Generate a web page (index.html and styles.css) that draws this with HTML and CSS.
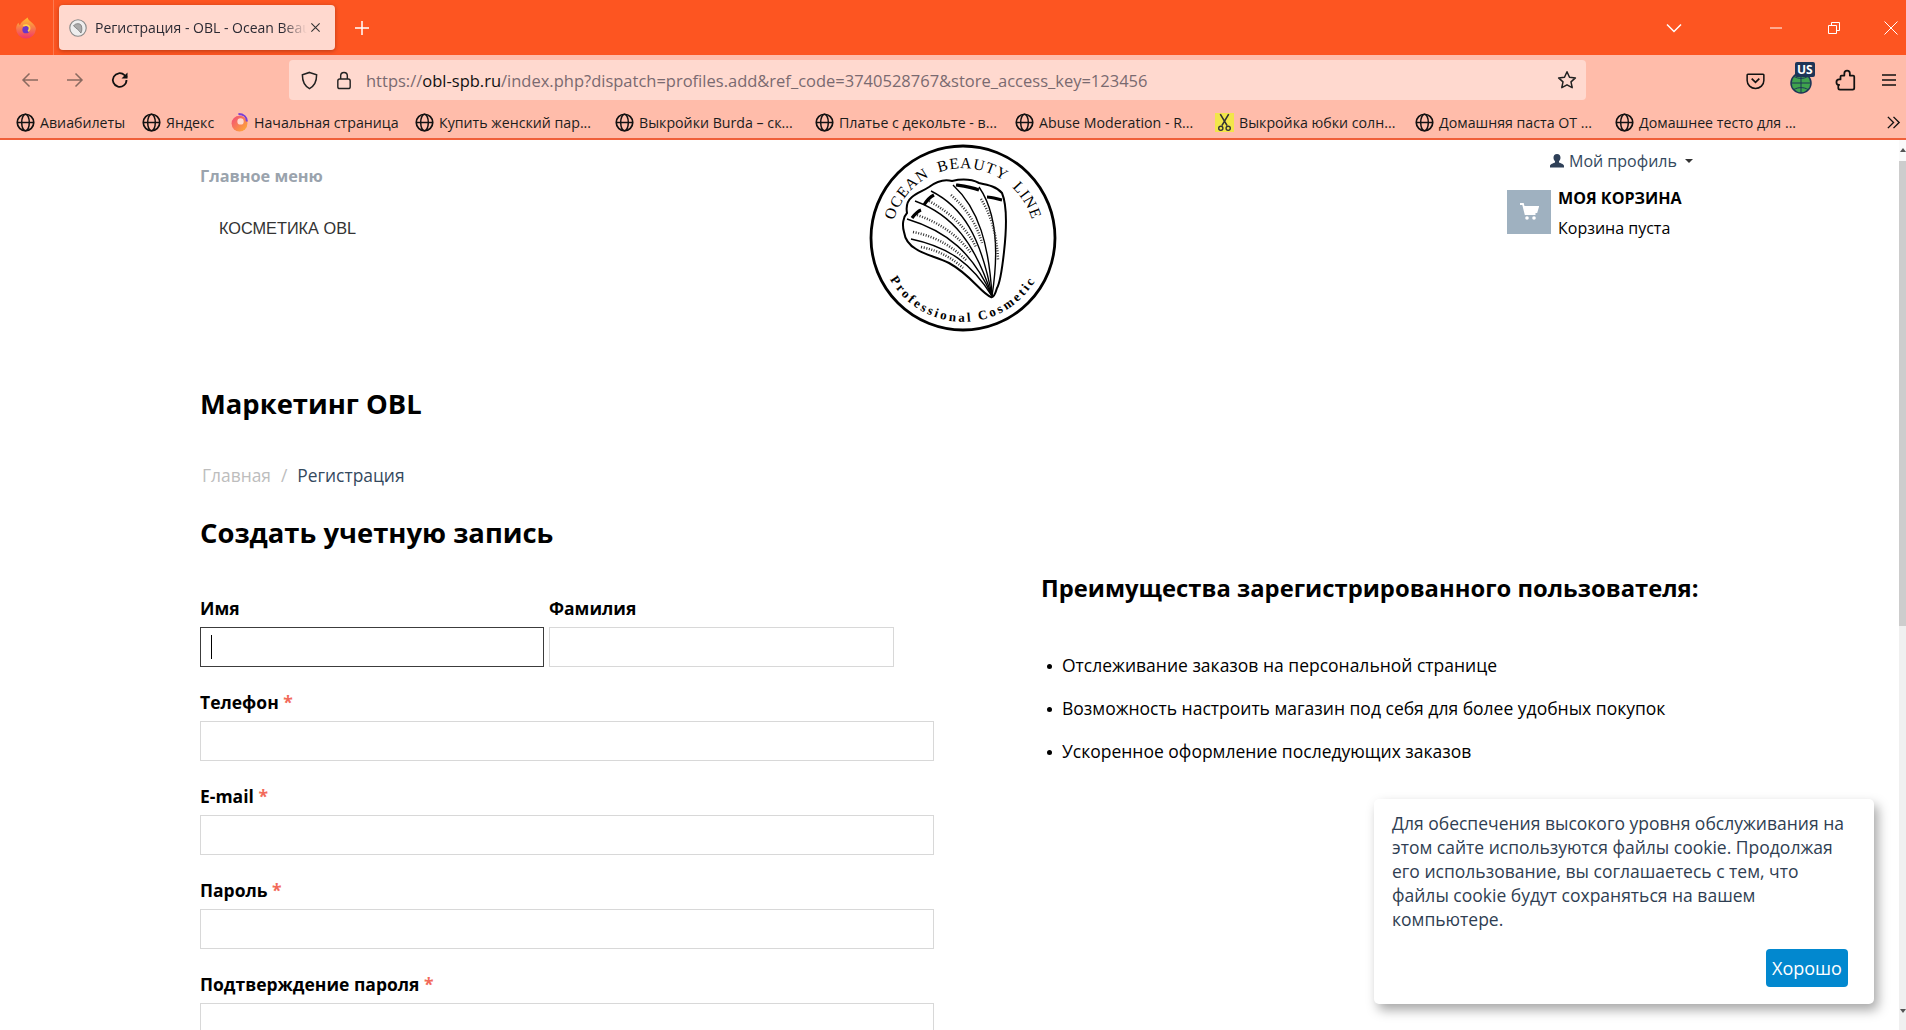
FILE: index.html
```html
<!DOCTYPE html>
<html lang="ru">
<head>
<meta charset="utf-8">
<title>Регистрация - OBL</title>
<link rel="stylesheet" href="styles.css">
</head>
<body>
<svg class="defs" width="0" height="0">
  <symbol id="globe" viewBox="0 0 18 18"><circle cx="9" cy="9" r="7.8" fill="none" stroke="#111" stroke-width="1.6"/><ellipse cx="9" cy="9" rx="3.6" ry="7.8" fill="none" stroke="#111" stroke-width="1.4"/><path d="M1.5 9h15" stroke="#111" stroke-width="1.4"/></symbol>
</svg>
<div class="tabbar">
  <div class="ff-cell">
    <svg class="ff" viewBox="0 0 20 20"><defs><linearGradient id="ffg" x1="0" y1="0" x2="0" y2="1"><stop offset="0" stop-color="#ffc02e"/><stop offset="1" stop-color="#f0366a"/></linearGradient></defs><path d="M10 19.500a9 9 0 0 1-9-9.300c.2-2.200 1-3.700 2.200-4.900.2 1 .6 1.700 1.300 2.100C5.500 4.800 8 3 11.500.5c.2 2 2 2.700 4.200 5 2 2 3.300 3.700 3.300 5.500a9 9 0 0 1-9 8.500z" fill="url(#ffg)"/><circle cx="10" cy="11.500" r="3.300" fill="#6b35c9"/><path d="M7.500 8c2-1.200 4.500-.8 5.500 1 .6 1.500 0 3-1 4" fill="none" stroke="#ffd24a" stroke-width="1.600"/></svg>
  </div>
  <div class="tab">
    <svg class="favicon" viewBox="0 0 16 16"><circle cx="8" cy="8" r="7.300" fill="#eee" stroke="#888"/><path d="M4 6c2-2.500 6-2.500 7 0 .8 2.500.4 5-.4 6.500C9 10 6 8 4 6z" fill="#aaa" stroke="#666" stroke-width=".6"/></svg>
    <span class="tab-title">Регистрация - OBL - Ocean Beauty Line</span>
    <svg class="tab-close" viewBox="0 0 12 12"><path d="M1.500 1.500l9 9m0-9l-9 9" stroke="#333" stroke-width="1.200"/></svg>
  </div>
  <svg class="plus" viewBox="0 0 16 16"><path d="M8 1v14M1 8h14" stroke="#fff" stroke-width="1.500"/></svg>
  <div class="win">
    <svg class="chev" viewBox="0 0 16 10"><path d="M1 1.500l7 7 7-7" fill="none" stroke="#fff" stroke-width="1.500"/></svg>
    <svg class="win-min" viewBox="0 0 12 2"><path d="M0 1h12" stroke="#fff"/></svg>
    <svg class="win-res" viewBox="0 0 12 12"><path d="M.5 3.500h8v8h-8zM3.500 3.500v-3h8v8h-3" fill="none" stroke="#fff"/></svg>
    <svg class="win-x" viewBox="0 0 14 14"><path d="M.5.500l13 13m0-13l-13 13" stroke="#fff"/></svg>
  </div>
</div>
<div class="toolbar">
  <svg class="nav dim" viewBox="0 0 20 20"><path d="M18 10H3M9.500 3.500L3 10l6.500 6.500" fill="none" stroke="#8a6a60" stroke-width="1.500"/></svg>
  <svg class="nav dim" viewBox="0 0 20 20"><path d="M2 10h15M10.500 3.500L17 10l-6.500 6.500" fill="none" stroke="#8a6a60" stroke-width="1.500"/></svg>
  <svg class="nav" viewBox="0 0 20 20"><path d="M16.500 10a6.800 6.800 0 1 1-2-4.800L17 7.500" fill="none" stroke="#111" stroke-width="1.800"/><path d="M17.500 2.500v6h-6z" fill="#111"/></svg>
  <div class="urlbar">
    <svg class="shield" viewBox="0 0 20 20"><path d="M10 1.500l7.500 2.500c0 7-1.500 11.500-7.500 14.500C4 15.500 2.500 11 2.500 4z" fill="none" stroke="#222" stroke-width="1.600"/></svg>
    <svg class="lock" viewBox="0 0 16 20"><rect x="1.500" y="8.500" width="13" height="10" rx="2" fill="none" stroke="#222" stroke-width="1.500"/><path d="M4.500 8.500V5a3.500 3.500 0 0 1 7 0v3.500" fill="none" stroke="#222" stroke-width="1.500"/></svg>
    <span class="url"><span class="url-dim">https://</span>obl-spb.ru<span class="url-dim">/index.php?dispatch=profiles.add&amp;ref_code=3740528767&amp;store_access_key=123456</span></span>
    <svg class="star" viewBox="0 0 20 20"><path d="M10 1.800l2.500 5.400 5.900.7-4.400 4 1.200 5.800-5.200-2.900-5.200 2.900 1.200-5.800-4.400-4 5.900-.7z" fill="none" stroke="#222" stroke-width="1.500" stroke-linejoin="round"/></svg>
  </div>
  <svg class="pocket" viewBox="0 0 20 20"><path d="M2 3.500h16a.8.8 0 0 1 .8.8V10a8.800 8.300 0 0 1-17.600 0V4.300a.8.800 0 0 1 .8-.8z" fill="none" stroke="#111" stroke-width="1.600"/><path d="M6 8l4 4 4-4" fill="none" stroke="#111" stroke-width="1.800"/></svg>
  <div class="vpn">
    <svg class="vpn-globe" viewBox="0 0 22 22"><circle cx="11" cy="11" r="10" fill="#3fa34d"/><path d="M1 11h20M11 1v20M4 4.500c4 2.500 10 2.500 14 0M4 17.500c4-2.500 10-2.500 14 0" stroke="#1d3557" fill="none"/><circle cx="11" cy="11" r="10" fill="none" stroke="#1d3557" stroke-width="1.500"/></svg>
    <span class="vpn-badge">US</span>
  </div>
  <svg class="puzzle" viewBox="0 0 20 20"><path d="M4.500 18.800h11.500a1.500 1.500 0 0 0 1.500-1.500V7a1 1 0 0 0-1-1h-3V4a2.500 2.500 0 0 0-5 0v2H6a1 1 0 0 0-1 1v2.500H3.800a2.500 2.500 0 0 0 0 5H3v2.800a1.500 1.500 0 0 0 1.500 1.500z" fill="none" stroke="#111" stroke-width="1.600" stroke-linejoin="round"/></svg>
  <svg class="burger" viewBox="0 0 16 14"><path d="M1 2h14M1 7h14M1 12h14" stroke="#111" stroke-width="1.600"/></svg>
</div>
<div class="bookmarks">
  <div class="bm bm-a"><svg class="bm-ic"><use href="#globe"/></svg>Авиабилеты</div>
  <div class="bm bm-b"><svg class="bm-ic"><use href="#globe"/></svg>Яндекс</div>
  <div class="bm bm-c"><svg class="bm-ic" viewBox="0 0 18 18"><defs><linearGradient id="fxb" x1="0" y1="0" x2="1" y2="1"><stop offset="0" stop-color="#f2487d"/><stop offset="1" stop-color="#ffb22e"/></linearGradient></defs><circle cx="9" cy="10" r="7.500" fill="url(#fxb)"/><path d="M8 1c5 0 8 3 8 7" fill="none" stroke="#7a3fd6" stroke-width="2"/><circle cx="10" cy="8" r="3" fill="#ffd9cf"/></svg>Начальная страница</div>
  <div class="bm"><svg class="bm-ic"><use href="#globe"/></svg>Купить женский пар...</div>
  <div class="bm"><svg class="bm-ic"><use href="#globe"/></svg>Выкройки Burda – ск...</div>
  <div class="bm"><svg class="bm-ic"><use href="#globe"/></svg>Платье с декольте - в...</div>
  <div class="bm"><svg class="bm-ic"><use href="#globe"/></svg>Abuse Moderation - R...</div>
  <div class="bm"><svg class="bm-ic" viewBox="0 0 18 18"><rect width="18" height="18" fill="#f2e64a"/><path d="M5 1l6.500 11M13 1L6.500 12" stroke="#333" stroke-width="1.500"/><circle cx="5.500" cy="14.500" r="2" fill="none" stroke="#333" stroke-width="1.300"/><circle cx="12.500" cy="14.500" r="2" fill="none" stroke="#333" stroke-width="1.300"/></svg>Выкройка юбки солн...</div>
  <div class="bm"><svg class="bm-ic"><use href="#globe"/></svg>Домашняя паста ОТ ...</div>
  <div class="bm"><svg class="bm-ic"><use href="#globe"/></svg>Домашнее тесто для ...</div>
  <svg class="bm-more" viewBox="0 0 16 16"><path d="M2 2l6 6-6 6M8 2l6 6-6 6" fill="none" stroke="#111" stroke-width="1.500"/></svg>
</div>
<div class="page">
  <main class="content">
    <header class="site-head">
      <nav class="menu">
        <div class="menu-title">Главное меню</div>
        <div class="menu-item">КОСМЕТИКА OBL</div>
      </nav>
      <svg class="logo" viewBox="19 9 190 190">
        <defs>
          <path id="arcTop" d="M42.800 116A72 72 0 1 1 185.200 116"/>
          <path id="arcBot" d="M32.900 124.700A84 84 0 0 0 195.100 124.700"/>
        </defs>
        <circle cx="114" cy="103" r="92" fill="#fff" stroke="#000" stroke-width="2.800"/>
        <text class="logo-top"><textPath href="#arcTop" startOffset="50%" text-anchor="middle">OCEAN  BEAUTY  LINE</textPath></text>
        <text class="logo-bot"><textPath href="#arcBot" startOffset="50%" text-anchor="middle">Professional Cosmetic</textPath></text>
        <path class="shell" d="M142 162C132 158 122 140 100 128 88 122 76 120 67 114 60 110 56 104 55 97 53 90 54 82 58 78 57 72 58 66 63 62 68 58 74 56 80 52 88 46 96 44 103 46 112 44 122 44 130 48 140 50 148 52 153 58 158 70 158 90 155 117 153 135 151 148 148 153 146 160 144 163 142 162Z"/>
        <g class="ribs">
          <path d="M143 161C122 128 100 112 62 104"/>
          <path d="M143 161C124 118 98 96 58 84"/>
          <path d="M143 161C126 108 104 80 66 66"/>
          <path d="M143 161C132 102 114 72 82 56"/>
          <path d="M143 161C140 110 130 74 104 50"/>
          <path d="M143 161C150 116 148 78 130 52"/>
        </g>
        <g class="ribs-hatch">
          <path d="M72 112C92 116 104 124 114 133"/>
          <path d="M64 97C90 102 106 114 118 126"/>
          <path d="M68 80C92 88 110 102 122 118"/>
          <path d="M80 66C102 78 118 94 127 112"/>
          <path d="M102 60C118 74 128 90 133 108"/>
          <path d="M132 64C142 80 148 100 149 125"/>
        </g>
        <g class="ribs-dark">
          <path d="M63 83C66 79 69 76 72 75"/>
          <path d="M75 70C78 65 81 62 85 60"/>
          <path d="M107 50C114 51 122 52 130 55"/>
          <path d="M138 62C143 62 148 64 153 65"/>
        </g>
      </svg>
      <div class="account">
        <div class="profile"><svg class="user" viewBox="0 0 16 16"><path d="M8 1c2.300 0 3.500 1.700 3.500 3.800 0 1.500-.7 2.800-1.500 3.500v1.200c1.500.7 5 1.500 5 3.500v1.500H1v-1.500c0-2 3.500-2.800 5-3.500V8.300C5.200 7.600 4.500 6.300 4.500 4.800 4.500 2.700 5.700 1 8 1z" fill="#2f4058"/></svg>Мой профиль<span class="caret"></span></div>
        <div class="cart">
          <div class="cart-box"><svg class="cart-ic" viewBox="0 0 20 18"><path d="M1 1h3l2.500 10h10M5 4h14l-1.500 5H6.500" fill="none" stroke="#fff" stroke-width="1.800"/><path d="M5 4h14l-1.500 5H6.500z" fill="#fff"/><circle cx="8" cy="15" r="1.800" fill="#fff"/><circle cx="15" cy="15" r="1.800" fill="#fff"/></svg></div>
          <div class="cart-text">
            <div class="cart-title">МОЯ КОРЗИНА</div>
            <div class="cart-empty">Корзина пуста</div>
          </div>
        </div>
      </div>
    </header>
    <h1 class="site-title">Маркетинг OBL</h1>
    <div class="crumbs"><span class="crumb-home">Главная</span><span class="crumb-sep">/</span><span>Регистрация</span></div>
    <div class="columns">
      <section class="left">
        <h2 class="form-title">Создать учетную запись</h2>
        <div class="name-row">
          <div class="field half">
            <div class="label">Имя</div>
            <div class="input focus"><span class="text-caret"></span></div>
          </div>
          <div class="field half">
            <div class="label">Фамилия</div>
            <div class="input"></div>
          </div>
        </div>
        <div class="field"><div class="label">Телефон <span class="req">*</span></div><div class="input"></div></div>
        <div class="field"><div class="label">E-mail <span class="req">*</span></div><div class="input"></div></div>
        <div class="field"><div class="label">Пароль <span class="req">*</span></div><div class="input"></div></div>
        <div class="field"><div class="label">Подтверждение пароля <span class="req">*</span></div><div class="input"></div></div>
      </section>
      <section class="right">
        <h3 class="benefits-title">Преимущества зарегистрированного пользователя:</h3>
        <ul class="benefits">
          <li>Отслеживание заказов на персональной странице</li>
          <li>Возможность настроить магазин под себя для более удобных покупок</li>
          <li>Ускоренное оформление последующих заказов</li>
        </ul>
      </section>
    </div>
    <aside class="cookie">
      <p class="cookie-text">Для обеспечения высокого уровня обслуживания на этом сайте используются файлы cookie. Продолжая его использование, вы соглашаетесь с тем, что файлы cookie будут сохраняться на вашем компьютере.</p>
      <div class="cookie-actions"><span class="cookie-btn">Хорошо</span></div>
    </aside>
  </main>
  <div class="scrollbar">
    <div class="sb-arrow sb-top"><span class="tri-up"></span></div>
    <div class="sb-thumb"></div>
    <div class="sb-arrow sb-bottom"><span class="tri-down"></span></div>
  </div>
</div>
</body>
</html>
```

FILE: styles.css
```css
* { box-sizing: border-box; }
html, body { margin: 0; height: 100%; }
body { width: 1906px; height: 1030px; overflow: hidden; display: flex; flex-direction: column; font-family: "Open Sans", "Noto Sans", sans-serif; background: #fff; color: #000; }
.defs { position: absolute; }

.tabbar { height: 55px; background: #fd5521; display: flex; align-items: center; flex: none; }
.ff-cell { width: 54px; height: 55px; display: flex; align-items: center; justify-content: center; border-right: 1px solid #fc7a50; }
.ff { width: 22px; height: 22px; margin-right: 2px; }
.tab { width: 276px; height: 45px; margin-left: 5px; background: #ffd9cf; border-radius: 4px; box-shadow: 0 1px 4px rgba(80,20,0,.4); display: flex; align-items: center; padding: 0 10px; }
.favicon { width: 18px; height: 18px; flex: none; }
.tab-title { font-size: 14px; color: #2b2a33; margin-left: 8px; width: 212px; white-space: nowrap; overflow: hidden; -webkit-mask-image: linear-gradient(90deg, #000 88%, transparent); mask-image: linear-gradient(90deg, #000 88%, transparent); }
.tab-close { width: 11px; height: 11px; flex: none; margin-left: 3px; }
.plus { width: 16px; height: 16px; margin-left: 19px; }
.win { margin-left: auto; display: flex; align-items: center; }
.chev { width: 16px; height: 10px; margin-right: 88px; }
.win-min { width: 12px; height: 2px; margin-right: 46px; }
.win-res { width: 12px; height: 12px; margin-right: 44px; }
.win-x { width: 14px; height: 14px; margin-right: 8px; }

.toolbar { height: 50px; background: #ffbcaa; display: flex; align-items: center; flex: none; }
.nav { width: 20px; height: 20px; margin-left: 25px; }
.nav:first-child { margin-left: 20px; }
.urlbar { width: 1297px; height: 40px; margin-left: 159px; background: #ffd9cf; border-radius: 4px; display: flex; align-items: center; padding: 0 9px 0 11px; }
.shield { width: 19px; height: 19px; flex: none; }
.lock { width: 16px; height: 19px; flex: none; margin-left: 17px; }
.url { font-size: 16.500px; color: #111; margin-left: 14px; white-space: nowrap; flex: 1; }
.url-dim { color: #7a6a70; }
.star { width: 20px; height: 20px; flex: none; }
.pocket { width: 19px; height: 19px; margin-left: 160px; }
.vpn { width: 24px; height: 24px; margin-left: 25px; position: relative; }
.vpn-globe { width: 22px; height: 22px; position: absolute; left: 0; top: 4px; }
.vpn-badge { position: absolute; left: 5px; top: -6px; background: #1d3557; color: #fff; font-size: 12px; font-weight: 700; line-height: 15px; padding: 0 2px; border-radius: 2px; }
.puzzle { width: 22px; height: 22px; margin-left: 21px; }
.burger { width: 16px; height: 14px; margin-left: 24px; }

.bookmarks { height: 35px; background: #ffbcaa; border-bottom: 2px solid #f0603a; display: flex; align-items: center; padding: 2px 0 0 16px; flex: none; }
.bm { display: flex; align-items: center; width: 200px; flex: none; font-size: 14.200px; color: #1c1c1c; white-space: nowrap; }
.bm-a { width: 126px; }
.bm-b { width: 88px; }
.bm-c { width: 185px; }
.bm-ic { width: 19px; height: 19px; margin-right: 5px; flex: none; }
.bm-more { width: 15px; height: 15px; margin-left: auto; margin-right: 5px; }

.page { flex: 1; display: flex; min-height: 0; }
.content { flex: 1; position: relative; padding-left: 200px; overflow: hidden; }
.scrollbar { width: 7px; background: #f0f0f0; flex: none; display: flex; flex-direction: column; }
.sb-arrow { display: flex; justify-content: center; flex: none; }
.sb-top { height: 21px; background: #fafafa; padding-top: 8px; }
.sb-bottom { margin-top: auto; height: 24px; padding-top: 3px; }
.tri-up, .tri-down { width: 0; height: 0; border: 3px solid transparent; }
.tri-up { border-top: 0; border-bottom: 4px solid #555; }
.tri-down { border-bottom: 0; border-top: 4px solid #555; }
.sb-thumb { height: 465px; background: #cdcdcd; flex: none; }

.site-head { display: grid; grid-template-columns: 668px 190px 1fr; height: 200px; }
.menu-title { font-size: 16.300px; font-weight: 700; color: #9aa3ad; margin-top: 25px; line-height: 22px; }
.menu-item { font-family: "Liberation Sans", sans-serif; font-size: 16.300px; color: #333; margin: 30px 0 0 19px; line-height: 22px; }
.logo { width: 190px; height: 190px; margin-top: 4px; }
.logo-top { font-family: "Liberation Serif", serif; font-size: 15.500px; letter-spacing: 1px; white-space: pre; }
.logo-bot { font-family: "Liberation Serif", serif; font-size: 13px; font-weight: 700; letter-spacing: 2.600px; }
.shell { fill: #fff; stroke: #000; stroke-width: 2; }
.ribs path { fill: none; stroke: #000; stroke-width: 1.400; }
.ribs-hatch path { fill: none; stroke: #333; stroke-width: 2.500; stroke-dasharray: 1 1.600; }
.ribs-dark path { fill: none; stroke: #000; stroke-width: 3.200; }

.account { padding-left: 449px; }
.profile { display: flex; align-items: center; font-size: 16px; color: #34495e; margin: 9px 0 0 42px; line-height: 24px; white-space: nowrap; }
.user { width: 16px; height: 16px; margin-right: 4px; }
.caret { border: 4px solid transparent; border-top-color: #333; border-bottom: 0; margin-left: 8px; }
.cart { display: flex; margin-top: 17px; }
.cart-box { width: 44px; height: 44px; background: #9fb1c0; display: flex; align-items: center; justify-content: center; flex: none; }
.cart-ic { width: 20px; height: 18px; }
.cart-text { margin-left: 7px; white-space: nowrap; }
.cart-title { font-size: 16.100px; font-weight: 700; line-height: 20px; margin-top: -2px; }
.cart-empty { font-size: 16px; line-height: 22px; margin-top: 9px; }

.site-title { font-size: 27.400px; font-weight: 700; margin: 45px 0 0; line-height: 38px; }
.crumbs { font-size: 17.400px; line-height: 24px; margin: 40px 0 0 2px; color: #34495e; display: flex; }
.crumb-home { color: #bdbdbd; }
.crumb-sep { color: #bdbdbd; margin: 0 10px; }

.columns { display: grid; grid-template-columns: 734px 1fr; column-gap: 107px; }
.form-title { font-size: 27.400px; font-weight: 700; margin: 27px 0 0; line-height: 38px; }
.name-row { display: flex; gap: 5px; margin-top: 45px; }
.half { width: 344px; }
.half + .half { width: 345px; }
.field { margin-bottom: 24px; }
.label { font-size: 17.500px; font-weight: 700; line-height: 22px; height: 22px; margin-bottom: 8px; white-space: nowrap; }
.req { color: #f26a5a; }
.input { height: 40px; border: 1px solid #d8d8d8; background: #fff; position: relative; display: flex; align-items: center; padding-left: 10px; }
.focus { border: 1px solid #3c3c3c; }
.text-caret { width: 1px; height: 24px; background: #000; }

.benefits-title { font-size: 23.800px; font-weight: 700; margin: 84px 0 0; line-height: 34px; }
.benefits { list-style: none; margin: 39px 0 0; padding: 0; }
.benefits li { font-size: 17.500px; line-height: 43px; padding-left: 21px; position: relative; white-space: nowrap; }
.benefits li::before { content: ""; position: absolute; left: 6px; top: 20px; width: 5px; height: 5px; border-radius: 50%; background: #000; }

.cookie { position: absolute; left: 1374px; top: 659px; width: 500px; height: 205px; background: #fff; border-radius: 5px; box-shadow: 4px 6px 12px rgba(0,0,0,.35); padding: 12px 18px; }
.cookie-text { margin: 0; font-size: 17.500px; line-height: 24px; color: #2f3e52; }
.cookie-actions { display: flex; justify-content: flex-end; margin-top: 18px; padding-right: 8px; }
.cookie-btn { background: #0288cf; color: #fff; font-size: 18px; width: 82px; height: 38px; line-height: 38px; text-align: center; border-radius: 4px; }
```
